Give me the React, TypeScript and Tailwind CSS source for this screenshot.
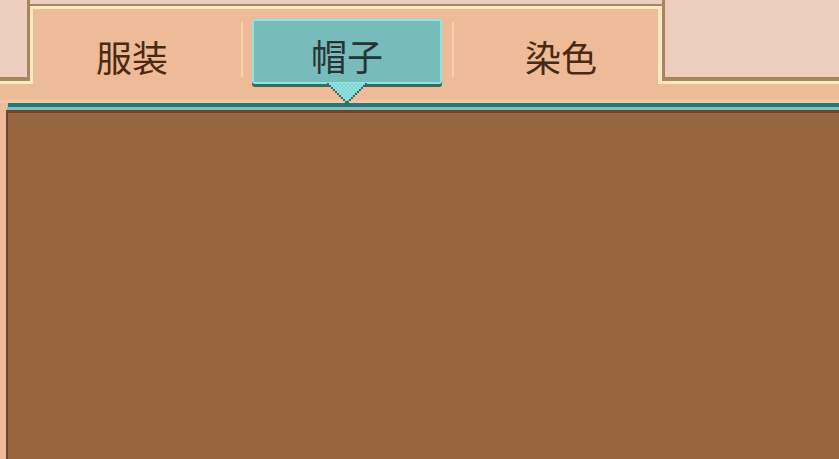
import React from "react";

const tabs = ["服装", "帽子", "染色"];

// pixel-stepped pointer under the selected tab
function TabPointer() {
    const rows = Array.from({ length: 10 }, (_, i) => i);
    return (
        <svg width="40" height="24" viewBox="0 0 20 12" shapeRendering="crispEdges" className="block">
            {rows.map((i) => (
                <g key={i}>
                    <rect x={i} y={i} width={20 - 2 * i} height={1} fill="#8fe3e3" />
                    {Array.from({ length: Math.max(0, 18 - 2 * i) }, (_, k) =>
                        (i + 1 + k + i) % 2 === 0 ? (
                            <rect key={k} x={i + 1 + k} y={i} width={1} height={1} fill="#80d4d4" />
                        ) : null
                    )}
                    <rect x={i} y={i} width={1} height={1} fill="#2e6d69" />
                    <rect x={19 - i} y={i} width={1} height={1} fill="#2e6d69" />
                </g>
            ))}
            <rect x={9} y={10} width={2} height={1} fill="#2e6d69" />
        </svg>
    );
}

export default function App() {
    return (
        <div className="w-[839px] h-[459px] overflow-hidden bg-[#edbb98] flex flex-col font-['Noto_Sans_CJK_SC','Noto_Sans',sans-serif]">
            {/* tab strip */}
            <div className="flex h-[84px] shrink-0">
                <div className="w-[30px] flex flex-col">
                    <div className="h-[81px] bg-[#eccdbe] border-r-[3px] border-b-[4px] border-[#a8845f]" />
                    <div className="h-[3px] bg-[#fde8c4]" />
                </div>

                <div className="w-[632px] flex flex-col">
                    <div className="h-[5px] bg-[#eccdbe]" />
                    <div className="flex-1 bg-[#edbb98] border-t-[2px] border-[#a8845f] shadow-[inset_3px_3px_0_#fde8c4,inset_-4px_0_0_#fde8c4]">
                        <div className="flex items-start pt-[13px]">
                            <div className="w-[204px] h-[65px] flex items-center justify-center pt-[8px] text-[36px] text-[#4a2913] leading-none">
                                {tabs[0]}
                            </div>
                            <div className="ml-[7px] mt-[3px] w-[2px] h-[55px] bg-[#f5d1b1]" />
                            <div className="relative z-10 ml-[9px] w-[190px] h-[65px] rounded-[3px] border-2 border-[#8fe3e3] bg-[#77bcbb] shadow-[0_3px_0_#2e6d69] flex items-center justify-center pt-[6px] text-[36px] text-[#263433] leading-none">
                                {tabs[1]}
                                <div className="absolute left-1/2 -translate-x-1/2 top-[62px]">
                                    <TabPointer />
                                </div>
                            </div>
                            <div className="ml-[10px] mt-[3px] w-[2px] h-[55px] bg-[#f5d1b1]" />
                            <div className="flex-1 pl-[6px] h-[65px] flex items-center justify-center pt-[8px] text-[36px] text-[#4a2913] leading-none">
                                {tabs[2]}
                            </div>
                        </div>
                    </div>
                </div>

                <div className="flex-1 flex flex-col">
                    <div className="h-[81px] bg-[#eccdbe] border-l-[3px] border-b-[4px] border-[#a8845f]" />
                    <div className="h-[3px] bg-[#fde8c4]" />
                </div>
            </div>

            <div className="h-[19px] shrink-0 border-b-[3px] border-[#f3c6a5]" />

            {/* content panel */}
            <div className="ml-[6px] flex-1 flex flex-col">
                <div className="ml-[2px] h-[4px] bg-[#2f7571]" />
                <div className="ml-[1px] h-[3px] bg-[#7cc1bf]" />
                <div className="flex-1 bg-[#97663f] border-l-2 border-t-[3px] border-[#6a4630]" />
            </div>
        </div>
    );
}
